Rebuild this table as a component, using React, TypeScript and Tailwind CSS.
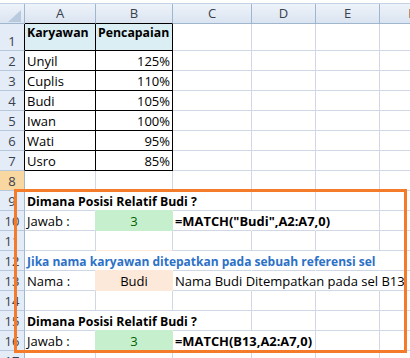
import React from 'react';

type Cell = {
  t?: string;
  a?: 'l' | 'r' | 'c';
  c?: string;
  bg?: string;
  rb?: string;
  bb?: string;
};

type Row = {
  n: number;
  h: string;
  cells: Cell[];
  hdr?: string;
  hb?: string;
  top?: boolean;
};

const W = ['w-[71px]', 'w-[77px]', 'w-[79px]', 'w-[64px]', 'w-[64px]', 'w-[64px]'];
const G_R = 'border-r-[#d0d7e5]';
const G_B = 'border-b-[#d0d7e5]';
const BLK_R = 'border-r-black';
const BLK_B = 'border-b-black';
const T_R = 'border-r-transparent';
const GRN_R = 'border-r-[#c6efce]';
const GRN_B = 'border-b-[#c6efce]';
const PCH_R = 'border-r-[#fde9d9]';
const PCH_B = 'border-b-[#fde9d9]';
const BOLD = 'font-bold text-[12.3px]';
const FORMULA = 'font-bold text-[12.9px]';

const tbl = (t: string, a: 'l' | 'r' = 'l'): Cell => ({ t, a, rb: BLK_R, bb: BLK_B });

const ROWS: Row[] = [
  {
    n: 1,
    h: 'h-[27px]',
    top: true,
    hb: BLK_R,
    cells: [
      { t: 'Karyawan', c: BOLD, bg: 'bg-[#daeef3]', rb: BLK_R, bb: BLK_B },
      { t: 'Pencapaian', c: BOLD, bg: 'bg-[#daeef3]', rb: BLK_R, bb: BLK_B },
    ],
  },
  { n: 2, h: 'h-[20px]', hb: BLK_R, cells: [tbl('Unyil'), tbl('125%', 'r')] },
  { n: 3, h: 'h-[20px]', hb: BLK_R, cells: [tbl('Cuplis'), tbl('110%', 'r')] },
  { n: 4, h: 'h-[20px]', hb: BLK_R, cells: [tbl('Budi'), tbl('105%', 'r')] },
  { n: 5, h: 'h-[20px]', hb: BLK_R, cells: [tbl('Iwan'), tbl('100%', 'r')] },
  { n: 6, h: 'h-[20px]', hb: BLK_R, cells: [tbl('Wati'), tbl('95%', 'r')] },
  { n: 7, h: 'h-[20px]', hb: BLK_R, cells: [tbl('Usro'), tbl('85%', 'r')] },
  { n: 8, h: 'h-[20px]', hdr: 'bg-[#f9d7a1]', cells: [] },
  {
    n: 9,
    h: 'h-[20px]',
    cells: [
      { t: 'Dimana Posisi Relatif Budi ?', c: BOLD, rb: T_R },
      { rb: T_R, bb: GRN_B },
    ],
  },
  {
    n: 10,
    h: 'h-[20px]',
    cells: [
      { t: 'Jawab :', rb: GRN_R },
      { t: '3', a: 'c', c: 'text-[#006100]', bg: 'bg-[#c6efce]', rb: GRN_R, bb: GRN_B },
      { t: '=MATCH("Budi",A2:A7,0)', c: FORMULA, rb: T_R },
      { rb: T_R },
    ],
  },
  { n: 11, h: 'h-[20px]', cells: [{}, { bb: PCH_B }] },
  {
    n: 12,
    h: 'h-[20px]',
    cells: [
      { t: 'Jika nama karyawan ditepatkan pada sebuah referensi sel', c: 'font-bold text-[12px] text-[#2c71c6]', rb: T_R },
      { rb: T_R, bb: PCH_B },
      { rb: T_R },
      { rb: T_R },
      { rb: T_R },
    ],
  },
  {
    n: 13,
    h: 'h-[20px]',
    cells: [
      { t: 'Nama :', rb: PCH_R },
      { t: 'Budi', a: 'c', bg: 'bg-[#fde9d9]', rb: PCH_R, bb: PCH_B },
      { t: 'Nama Budi Ditempatkan pada sel B13', rb: T_R },
      { rb: T_R },
      { rb: T_R },
    ],
  },
  { n: 14, h: 'h-[20px]', cells: [] },
  {
    n: 15,
    h: 'h-[20px]',
    cells: [
      { t: 'Dimana Posisi Relatif Budi ?', c: BOLD, rb: T_R },
      { rb: T_R, bb: GRN_B },
    ],
  },
  {
    n: 16,
    h: 'h-[20px]',
    cells: [
      { t: 'Jawab :', rb: GRN_R },
      { t: '3', a: 'c', c: 'text-[#006100]', bg: 'bg-[#c6efce]', rb: GRN_R, bb: GRN_B },
      { t: '=MATCH(B13,A2:A7,0)', c: FORMULA, rb: T_R },
    ],
  },
  { n: 17, h: 'h-[20px]', cells: [] },
];

const justify = (a?: 'l' | 'r' | 'c') =>
  a === 'r' ? 'justify-end pr-[2px]' : a === 'c' ? 'justify-center' : 'justify-start pl-[2px]';

function RowView({ row }: { row: Row }) {
  return (
    <div className={`flex shrink-0 ${row.h}`}>
      <div
        className={`flex w-[25px] shrink-0 justify-center border-r border-b border-b-[#b7c8dc] ${
          row.hb ?? 'border-r-[#9eb6ce]'
        } ${row.hdr ?? 'bg-[#e4ecf7]'} items-end text-[#38414d]`}
      >
        <span className="leading-[17px]">{row.n}</span>
      </div>
      {W.map((w, i) => {
        const c = row.cells[i] ?? {};
        return (
          <div
            key={i}
            className={`flex shrink-0 border-r border-b ${w} ${c.rb ?? G_R} ${c.bb ?? G_B} ${c.bg ?? ''} ${
              row.top ? 'items-start' : 'items-end'
            } ${justify(c.a)}`}
          >
            {c.t !== undefined && (
              <span className={`shrink-0 whitespace-nowrap leading-[17px] ${c.c ?? ''}`}>{c.t}</span>
            )}
          </div>
        );
      })}
    </div>
  );
}

export default function App() {
  const headers = ['A', 'B', 'C', 'D', 'E', 'F'];
  return (
    <div className="relative h-[358px] w-[410px] overflow-hidden bg-white font-['Open_Sans',sans-serif] text-[13px] text-black">
      <div className="h-[3px]" />
      <div className="flex h-[21px] border-t border-t-[#c3d2e4] bg-linear-to-b from-[#eef3fa] to-[#d9e3f0]">
        <div className="relative w-[25px] shrink-0 border-r border-b border-r-[#9eb6ce] border-b-[#9eb6ce]">
          <svg className="absolute left-0 top-0" width="24" height="19" viewBox="0 0 24 19">
            <polygon points="8,18 21,18 21,6" fill="#b9cadf" />
          </svg>
        </div>
        {headers.map((h, i) => (
          <div
            key={h}
            className={`flex shrink-0 items-center justify-center border-r border-b border-r-[#9eb6ce] ${W[i]} ${
              i < 2 ? 'border-b-black' : 'border-b-[#9eb6ce]'
            } text-[#38414d]`}
          >
            <span className="leading-[17px]">{h}</span>
          </div>
        ))}
      </div>
      {ROWS.map((r) => (
        <RowView key={r.n} row={r} />
      ))}
      <div className="pointer-events-none absolute left-[14px] top-[189px] h-[164px] w-[393px] border-[3px] border-[#f47b2a]" />
    </div>
  );
}
